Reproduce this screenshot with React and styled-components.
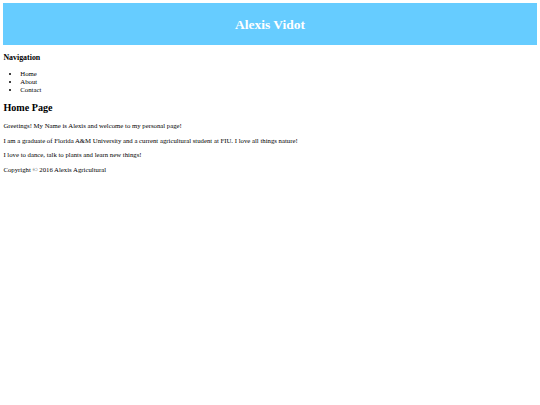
import React from "react";
import styled, { createGlobalStyle } from "styled-components";

// sizes are the browser defaults of a 1280px page, shown at 540px (x 0.421875)
const GlobalStyle = createGlobalStyle`
  html, body {
    margin: 0;
    padding: 0;
    background: #ffffff;
  }
`;

const Page = styled.div`
  padding: 3.4px;
  font-family: "Liberation Serif", "Times New Roman", serif;
  font-size: 6.75px;
  line-height: 7.76px;
  color: #000000;
`;

const Header = styled.header`
  background-color: #66ccff;
  padding: 4.2px;
  text-align: center;
`;

const Title = styled.h1`
  margin: 9.05px 0;
  font-size: 13.5px;
  line-height: 15.6px;
  font-weight: bold;
  color: #ffffff;
`;

const NavTitle = styled.h3`
  margin: 7.9px 0;
  font-size: 7.9px;
  line-height: 9.1px;
  font-weight: bold;
`;

const NavList = styled.ul`
  margin: 6.75px 0;
  padding-left: 16.9px;
  list-style: disc;
`;

const PageTitle = styled.h2`
  margin: 8.4px 0;
  font-size: 10.125px;
  line-height: 11.65px;
  font-weight: bold;
`;

const Text = styled.p`
  margin: 6.75px 0;
`;

const App = () => {
  const links = ["Home", "About", "Contact"];

  return (
    <>
      <GlobalStyle />
      <Page>
        <Header>
          <Title>Alexis Vidot</Title>
        </Header>
        <nav>
          <NavTitle>Navigation</NavTitle>
          <NavList>
            {links.map((link) => (
              <li key={link}>{link}</li>
            ))}
          </NavList>
        </nav>
        <main>
          <PageTitle>Home Page</PageTitle>
          <Text>Greetings! My Name is Alexis and welcome to my personal page!</Text>
          <Text>
            I am a graduate of Florida A&amp;M University and a current agricultural
            student at FIU. I love all things nature!
          </Text>
          <Text>I love to dance, talk to plants and learn new things!</Text>
        </main>
        <footer>
          <Text>Copyright © 2016 Alexis Agricultural</Text>
        </footer>
      </Page>
    </>
  );
};

export default App;
